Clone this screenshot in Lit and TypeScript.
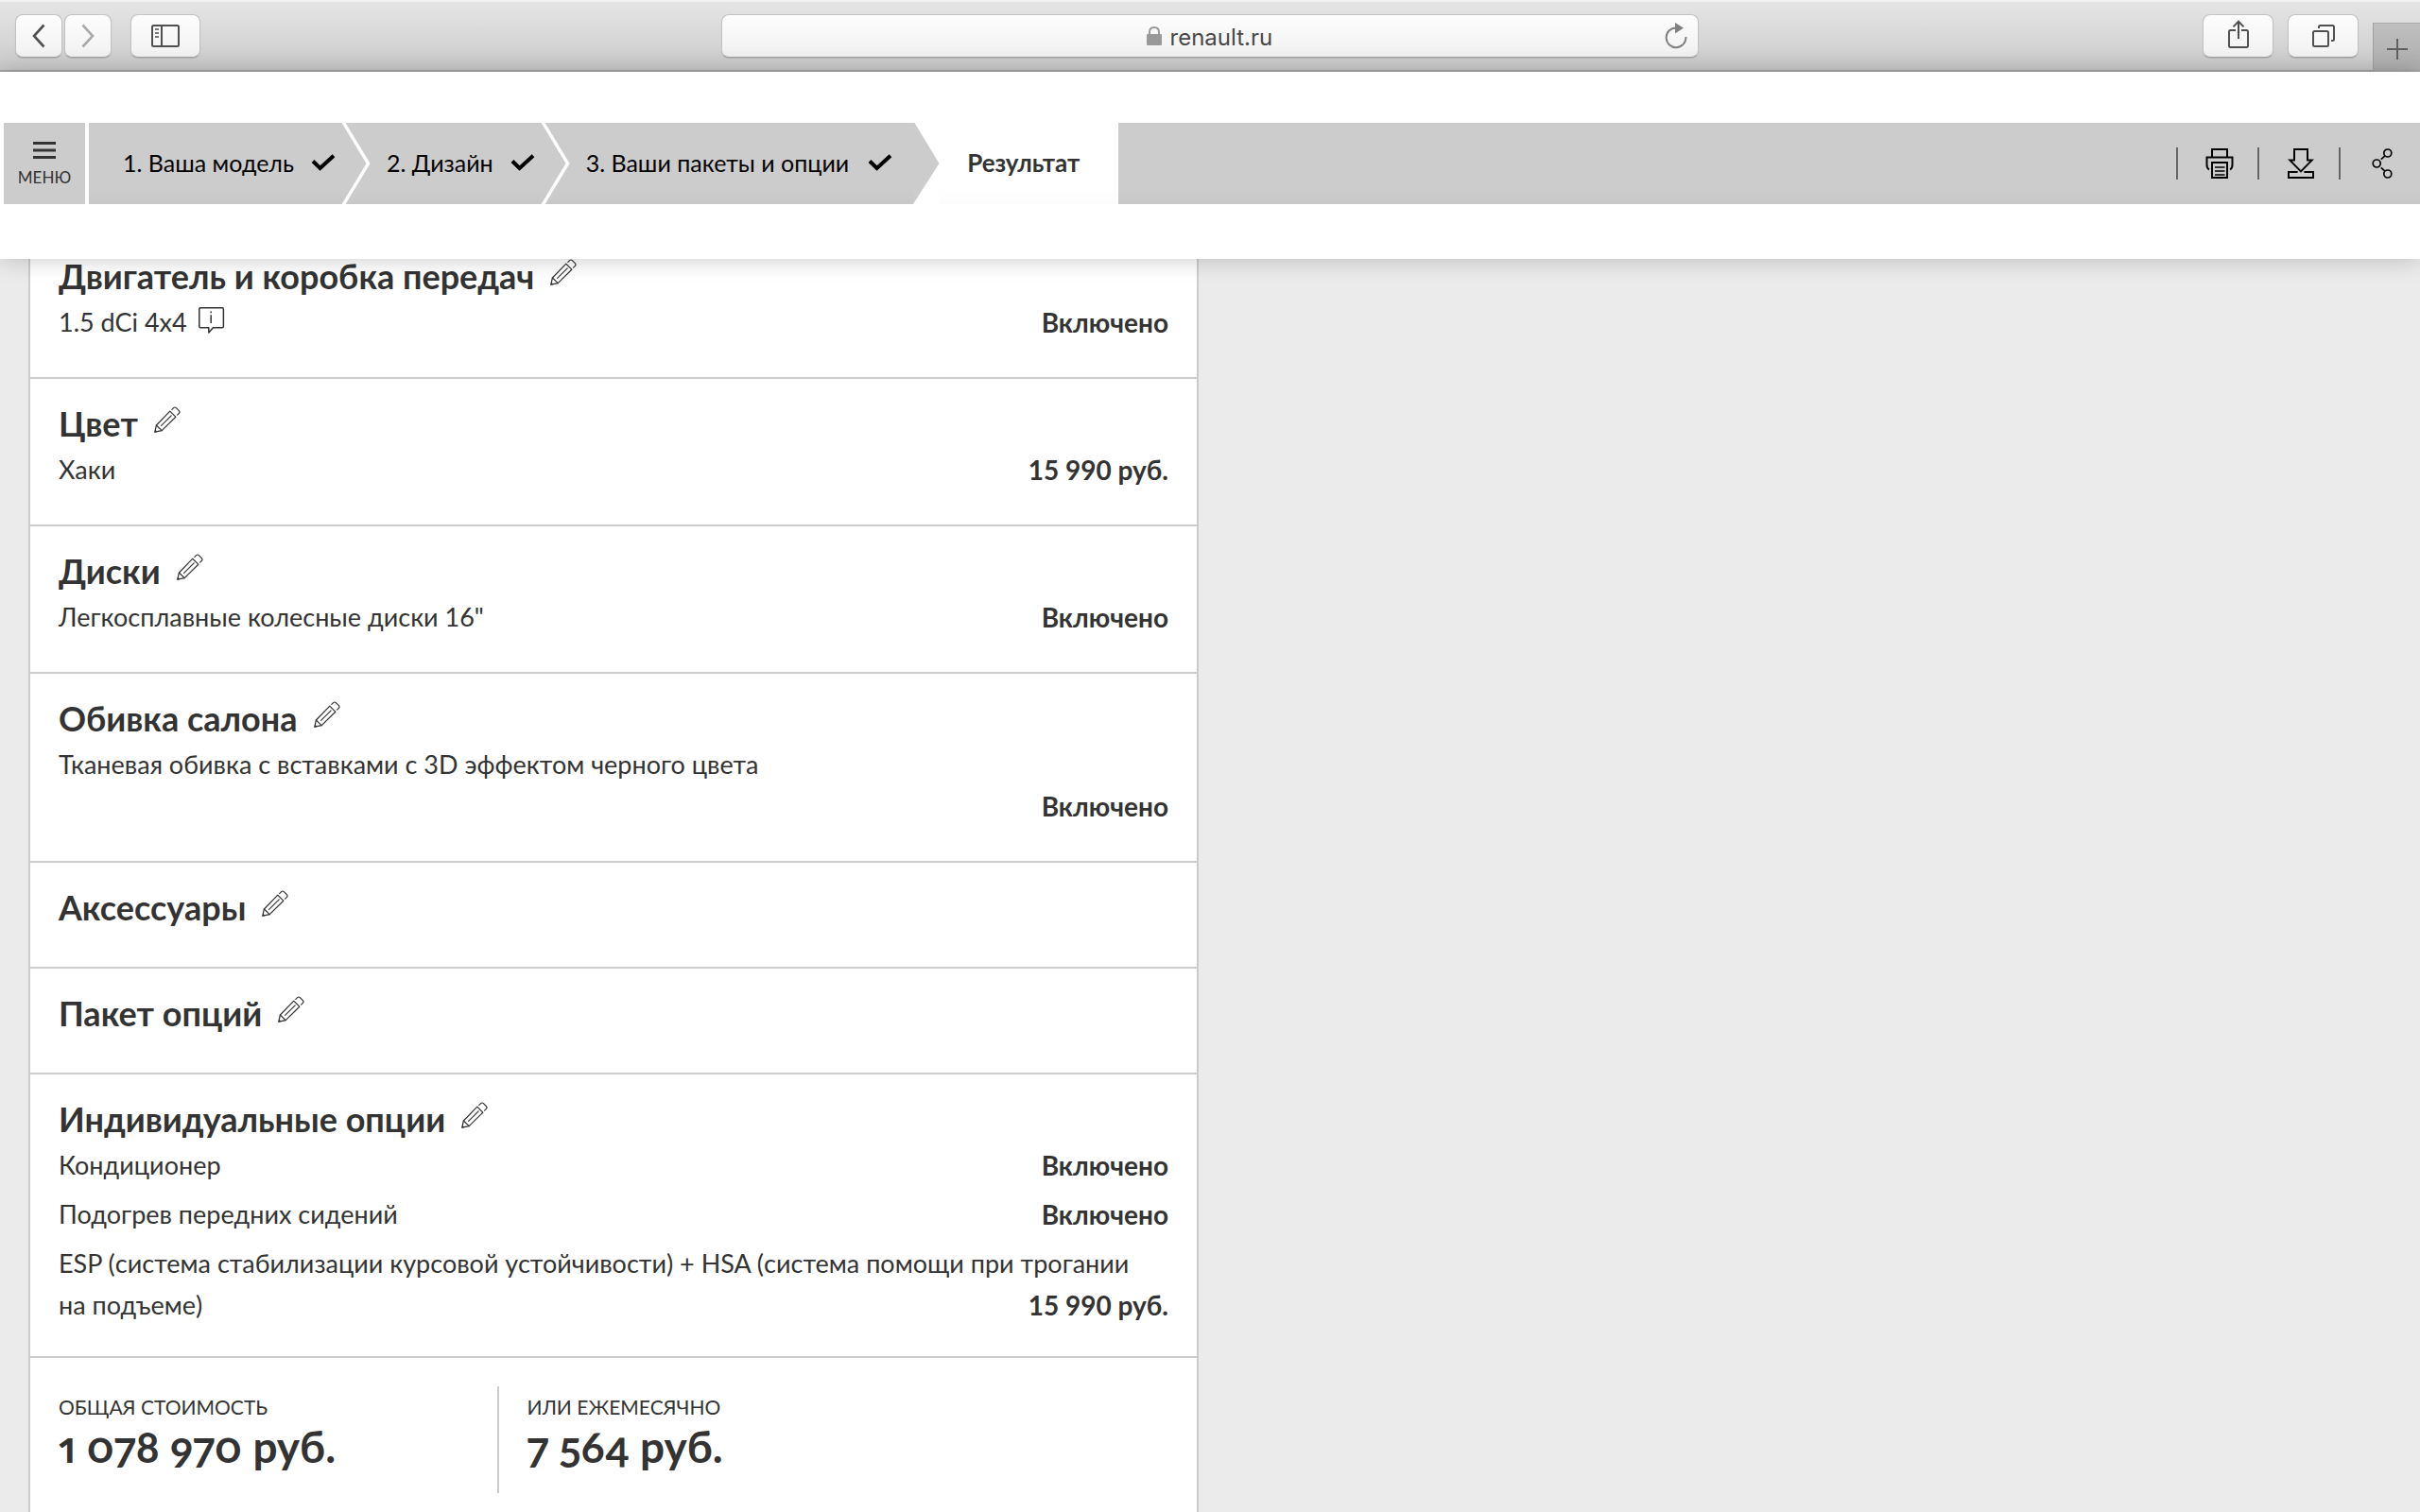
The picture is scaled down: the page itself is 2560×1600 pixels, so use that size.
import { LitElement, html, css, svg, nothing } from "lit";
import { customElement } from "lit/decorators.js";
import { classMap } from "lit/directives/class-map.js";

interface Option {
  name: string;
  price: string;
  info?: boolean;
  stacked?: boolean;
}

interface Section {
  title: string;
  options: Option[];
}

const INCLUDED = "Включено";

const SECTIONS: Section[] = [
  { title: "Двигатель и коробка передач", options: [{ name: "1.5 dCi 4x4", price: INCLUDED, info: true }] },
  { title: "Цвет", options: [{ name: "Хаки", price: "15 990 руб." }] },
  { title: "Диски", options: [{ name: 'Легкосплавные колесные диски 16"', price: INCLUDED }] },
  {
    title: "Обивка салона",
    options: [
      { name: "Тканевая обивка с вставками с 3D эффектом черного цвета", price: INCLUDED, stacked: true },
    ],
  },
  { title: "Аксессуары", options: [] },
  { title: "Пакет опций", options: [] },
  {
    title: "Индивидуальные опции",
    options: [
      { name: "Кондиционер", price: INCLUDED },
      { name: "Подогрев передних сидений", price: INCLUDED },
      {
        name: "ESP (система стабилизации курсовой устойчивости) + HSA (система помощи при трогании\nна подъеме)",
        price: "15 990 руб.",
      },
    ],
  },
];

const STEPS = ["1. Ваша модель", "2. Дизайн", "3. Ваши пакеты и опции"];

const TOTALS = [
  { label: "ОБЩАЯ СТОИМОСТЬ", value: "1 078 970 руб." },
  { label: "ИЛИ ЕЖЕМЕСЯЧНО", value: "7 564 руб." },
];

const icon = (w: number, h: number, body: unknown) =>
  html`<svg class="icon" width=${w} height=${h} viewBox="0 0 ${w} ${h}" fill="none" aria-hidden="true">${body}</svg>`;

const pencil = icon(28, 28, svg`
  <g stroke="#333" stroke-width="1.2" stroke-linejoin="round" stroke-linecap="round">
    <path d="M.8 27.2 2.4 20 16.8 5.2 22.8 11.2 8.2 25.6Z"/>
    <path d="M2.4 20 8.2 25.6"/>
    <path d="M7.6 20.4 18.2 9.8"/>
    <path d="M18.8 3.4 20.6 1.6Q22 .4 23.4 1.6L26.4 4.6Q27.6 6 26.4 7.4L24.6 9.2"/>
  </g>
  <path d="M.4 27.8 1.2 24.6 3.6 27Z" fill="#333"/>`);

const info = icon(28, 28, svg`
  <g stroke="#333" stroke-width="1.5" stroke-linejoin="round">
    <path d="M2 .8H25.2Q26.4.8 26.4 2V20.6Q26.4 21.8 25.2 21.8H15.4L10.8 27V21.8H2Q.8 21.8.8 20.6V2Q.8.8 2 .8Z"/>
    <path d="M13.2 4.6V6.2M13.2 8.2V17"/>
  </g>`);

const check = icon(26, 18, svg`<path d="M2 7.5 9.6 15 24 1.8" stroke="#000" stroke-width="4"/>`);

const chevron = icon(30, 86, svg`<path d="M1-1 27.6 43 1 87" stroke="#fff" stroke-width="3.4"/>`);

const arrow = icon(28, 86, svg`
  <path d="M0 0H28V86H0Z" fill="#fff"/>
  <path d="M0 0H1.5L27.5 43 0 86Z" fill="#ccc"/>`);

const printer = icon(30, 34, svg`
  <g stroke="#000" stroke-width="2">
    <path d="M7 11V2H23V11"/>
    <path d="M4 23.5Q1.5 22 1.5 18.5V10.5H28.5V18.5Q28.5 22 26 23.5"/>
    <path d="M7 16H23V32H7Z"/>
    <path d="M10 21H20.5M10 25H20.5M10 29H20.5" stroke-width="1.6"/>
  </g>`);

const download = icon(28, 34, svg`
  <g stroke="#000" stroke-width="2">
    <path d="M7 2H21V13.6H25.6L14 25.4 2.4 13.6H7Z"/>
    <path d="M10.6 26H1V32H27V26H17.4"/>
  </g>`);

const share = icon(22, 34, svg`
  <g stroke="#000" stroke-width="1.7">
    <circle cx="5.2" cy="17" r="4"/>
    <circle cx="16.8" cy="6" r="4"/>
    <circle cx="16.8" cy="28" r="4"/>
    <path d="M9.8 12.6 14 8.8M9.8 21.4 14 25.2"/>
  </g>`);

const burger = icon(24, 18, svg`<path d="M0 1.5H24M0 9H24M0 16.5H24" stroke="#333" stroke-width="3"/>`);

const back = icon(14, 26, svg`<path d="M12.5 1.5 2 13 12.5 24.5" stroke="#505050" stroke-width="2.6"/>`);

const forward = icon(14, 26, svg`<path d="M1.5 1.5 12 13 1.5 24.5" stroke="#aaa" stroke-width="2.6"/>`);

const sidebar = icon(30, 24, svg`
  <rect x="1" y="1" width="28" height="22" rx="1.5" stroke="#505050" stroke-width="2"/>
  <path d="M11 1V23" stroke="#505050" stroke-width="2"/>
  <path d="M4 5H8M4 9H8M4 13H8" stroke="#777" stroke-width="1.8"/>`);

const shareUp = icon(22, 34, svg`
  <g stroke="#505050" stroke-width="2">
    <path d="M8 11H2.5Q1 11 1 12.5V27.5Q1 29 2.5 29H19.5Q21 29 21 27.5V12.5Q21 11 19.5 11H14"/>
    <path d="M11 20V1.6M5.5 7.4 11 1.6 16.5 7.4"/>
  </g>`);

const tabs = icon(24, 24, svg`
  <g stroke="#505050" stroke-width="2">
    <rect x="1" y="7" width="16" height="16" rx="1.5"/>
    <path d="M7 4V2.5Q7 1 8.5 1H21.5Q23 1 23 2.5V15.5Q23 17 21.5 17H20"/>
  </g>`);

const plus = icon(22, 22, svg`<path d="M11 0V22M0 11H22" stroke="#606060" stroke-width="2"/>`);

const lock = icon(16, 20, svg`
  <rect y="8" width="16" height="12" rx="1" fill="#999"/>
  <path d="M3 9V6Q3 1 8 1T13 6V9" stroke="#999" stroke-width="2"/>`);

const reload = icon(24, 28, svg`
  <path d="M22.4 15A10.4 10.4 0 1 1 12 5.4" stroke="#808080" stroke-width="2"/>
  <path d="M11 0 20 5.6 11 11.6Z" fill="#808080"/>`);

@customElement("app-root")
export class AppRoot extends LitElement {
  static styles = css`
    :host {
      display: flex;
      flex-direction: column;
      height: 100vh;
      overflow: hidden;
      background: #ebebeb;
      color: #333;
      font-family: Lato, "Noto Sans", sans-serif;
    }
    *, *::before, *::after { box-sizing: border-box; }
    h2, p, ul, ol, dl, dd { margin: 0; padding: 0; }
    ul, ol { list-style: none; }
    button {
      margin: 0;
      padding: 0;
      border: 0;
      background: none;
      color: inherit;
      font: inherit;
      cursor: pointer;
    }
    .icon { display: block; flex: none; }

    .browser {
      flex: none;
      display: grid;
      grid-template-columns: 1fr minmax(0, 1034px) 1fr;
      height: 76px;
      border-top: 2px solid #f2f2f2;
      border-bottom: 2px solid #a6a6a6;
      background: linear-gradient(#e5e5e5, #cbcbcb);
    }
    .tools { display: flex; align-items: flex-start; padding: 13px 0 0 16px; }
    .tools-end { justify-content: flex-end; padding: 13px 0 0; }
    .tool {
      display: flex;
      align-items: center;
      justify-content: center;
      width: 50px;
      height: 46px;
      border: 1px solid #c2c2c2;
      border-bottom-color: #a2a2a2;
      border-radius: 8px;
      background: linear-gradient(#fdfdfd, #f2f2f2);
      box-shadow: 0 1px 1px rgba(0, 0, 0, 0.12);
    }
    .tool-next { margin-left: 2px; }
    .tool-wide { width: 74px; margin-left: 20px; }
    .tool-large { width: 75px; margin-right: 15px; }
    .new-tab {
      display: flex;
      align-items: center;
      justify-content: center;
      width: 50px;
      height: 50px;
      margin-top: 9px;
      padding-top: 4px;
      border-top: 1px solid #a8a8a8;
      border-left: 1px solid #a0a0a0;
      background: linear-gradient(#bebebe, #afafaf);
    }
    .address {
      display: grid;
      grid-template-columns: 1fr auto 1fr;
      align-items: center;
      height: 46px;
      margin-top: 13px;
      border: 1px solid #c2c2c2;
      border-bottom-color: #a2a2a2;
      border-radius: 8px;
      background: linear-gradient(#fdfdfd, #f1f1f1);
      box-shadow: 0 1px 1px rgba(0, 0, 0, 0.12);
    }
    .site { grid-column: 2; display: flex; align-items: center; gap: 9px; }
    .url {
      width: 110px;
      height: 34px;
      padding: 2px 0 0;
      border: 0;
      outline: 0;
      background: none;
      color: #484848;
      font: 24px/32px Inter, sans-serif;
    }
    .reload { justify-self: end; padding-right: 11px; }

    .header {
      flex: none;
      z-index: 1;
      padding: 54px 0 58px 4px;
      background: #fff;
      box-shadow: 0 0 24px rgba(0, 0, 0, 0.22);
    }
    .bar { display: flex; gap: 4px; height: 86px; }
    .menu {
      display: flex;
      flex-direction: column;
      align-items: center;
      gap: 8px;
      width: 86px;
      padding-top: 20px;
      background: #ccc;
      font-size: 17px;
      line-height: 24px;
    }
    .track {
      flex: 1;
      display: flex;
      background: linear-gradient(#ccc 80%, #c8c8c8);
    }
    .steps { display: flex; padding-left: 19px; }
    .step { display: flex; }
    .step-link {
      display: flex;
      align-items: center;
      gap: 18px;
      padding: 0 7px 2px 17px;
      color: #000;
      font-size: 25px;
      line-height: 32px;
      text-decoration: none;
      white-space: nowrap;
    }
    .step-last .step-link { gap: 20px; padding-right: 22px; }
    .result {
      display: flex;
      align-items: center;
      padding: 0 41px 2px 29px;
      background: linear-gradient(#fff 80%, #fcfcfc);
      font-size: 26px;
      font-weight: 700;
      line-height: 32px;
    }
    .actions { display: flex; align-items: center; margin-left: auto; }
    .action {
      display: flex;
      justify-content: center;
      width: 86px;
      padding-left: 4px;
      border-left: 2px solid #666;
    }

    .page { flex: 1; min-height: 0; overflow: hidden; padding-left: 30px; }
    .card {
      width: calc(50% - 27px);
      min-height: 120vh;
      margin-top: -29px;
      border: solid #ccc;
      border-width: 0 2px;
      background: #fff;
    }
    .section { padding: 25px 30px 36px; border-bottom: 2px solid #ccc; }
    .section-long { padding-bottom: 32px; }
    .heading { display: flex; align-items: center; gap: 17px; margin-bottom: 5px; }
    .title { font-size: 36px; font-weight: 700; line-height: 44px; }
    .edit { padding-bottom: 8px; }
    .option {
      display: flow-root;
      font-size: 27px;
      line-height: 44px;
      white-space: pre-line;
    }
    .option + .option { margin-top: 8px; }
    .info { display: inline-block; margin-left: 12px; vertical-align: -2px; line-height: 28px; }
    .price { float: right; font-size: 28px; font-weight: 700; }
    .price-below { float: none; display: block; text-align: right; }

    .totals { display: grid; grid-template-columns: 2fr 3fr; padding: 30px 0; }
    .total { padding: 6px 30px 23px; }
    .total + .total { border-left: 2px solid #ccc; }
    .total-label { font-size: 21px; line-height: 32px; }
    .total-value {
      font-size: 46px;
      font-weight: 700;
      line-height: 52px;
      font-variant-numeric: oldstyle-nums proportional-nums;
    }
  `;

  private renderBrowser() {
    return html`
      <div class="browser">
        <div class="tools">
          <button class="tool" aria-label="Назад">${back}</button>
          <button class="tool tool-next" aria-label="Вперед">${forward}</button>
          <button class="tool tool-wide" aria-label="Боковая панель">${sidebar}</button>
        </div>
        <div class="address">
          <label class="site">${lock}<input class="url" type="text" aria-label="Адрес" value="renault.ru" /></label>
          <button class="reload" aria-label="Обновить">${reload}</button>
        </div>
        <div class="tools tools-end">
          <button class="tool tool-large" aria-label="Поделиться">${shareUp}</button>
          <button class="tool tool-large" aria-label="Вкладки">${tabs}</button>
          <button class="new-tab" aria-label="Новая вкладка">${plus}</button>
        </div>
      </div>`;
  }

  private renderHeader() {
    return html`
      <header class="header">
        <div class="bar">
          <button class="menu">${burger}<span>МЕНЮ</span></button>
          <nav class="track">
            <ol class="steps">
              ${STEPS.map((step, i) => {
                const last = i === STEPS.length - 1;
                return html`<li class=${classMap({ step: true, "step-last": last })}>
                  <a class="step-link" href="#step-${i + 1}">${step}${check}</a>${last ? arrow : chevron}
                </li>`;
              })}
              <li class="result" aria-current="step">Результат</li>
            </ol>
            <div class="actions">
              <button class="action" aria-label="Печать">${printer}</button>
              <button class="action" aria-label="Скачать">${download}</button>
              <button class="action" aria-label="Поделиться">${share}</button>
            </div>
          </nav>
        </div>
      </header>`;
  }

  private renderOption(o: Option) {
    return html`<li class="option"><span>${o.name}</span>${o.info
        ? html`<button class="info" aria-label="Подробнее">${info}</button>`
        : nothing}<span class=${classMap({ price: true, "price-below": !!o.stacked })}>${o.price}</span></li>`;
  }

  private renderSection(s: Section) {
    return html`
      <section class=${classMap({ section: true, "section-long": s.options.length > 1 })}>
        <div class="heading">
          <h2 class="title">${s.title}</h2>
          <button class="edit" aria-label="Изменить: ${s.title}">${pencil}</button>
        </div>
        ${s.options.length ? html`<ul>${s.options.map((o) => this.renderOption(o))}</ul>` : nothing}
      </section>`;
  }

  render() {
    return html`
      ${this.renderBrowser()} ${this.renderHeader()}
      <main class="page">
        <div class="card">
          ${SECTIONS.map((s) => this.renderSection(s))}
          <dl class="totals">
            ${TOTALS.map(
              (t) => html`<div class="total">
                <dt class="total-label">${t.label}</dt>
                <dd class="total-value">${t.value}</dd>
              </div>`,
            )}
          </dl>
        </div>
      </main>`;
  }
}
